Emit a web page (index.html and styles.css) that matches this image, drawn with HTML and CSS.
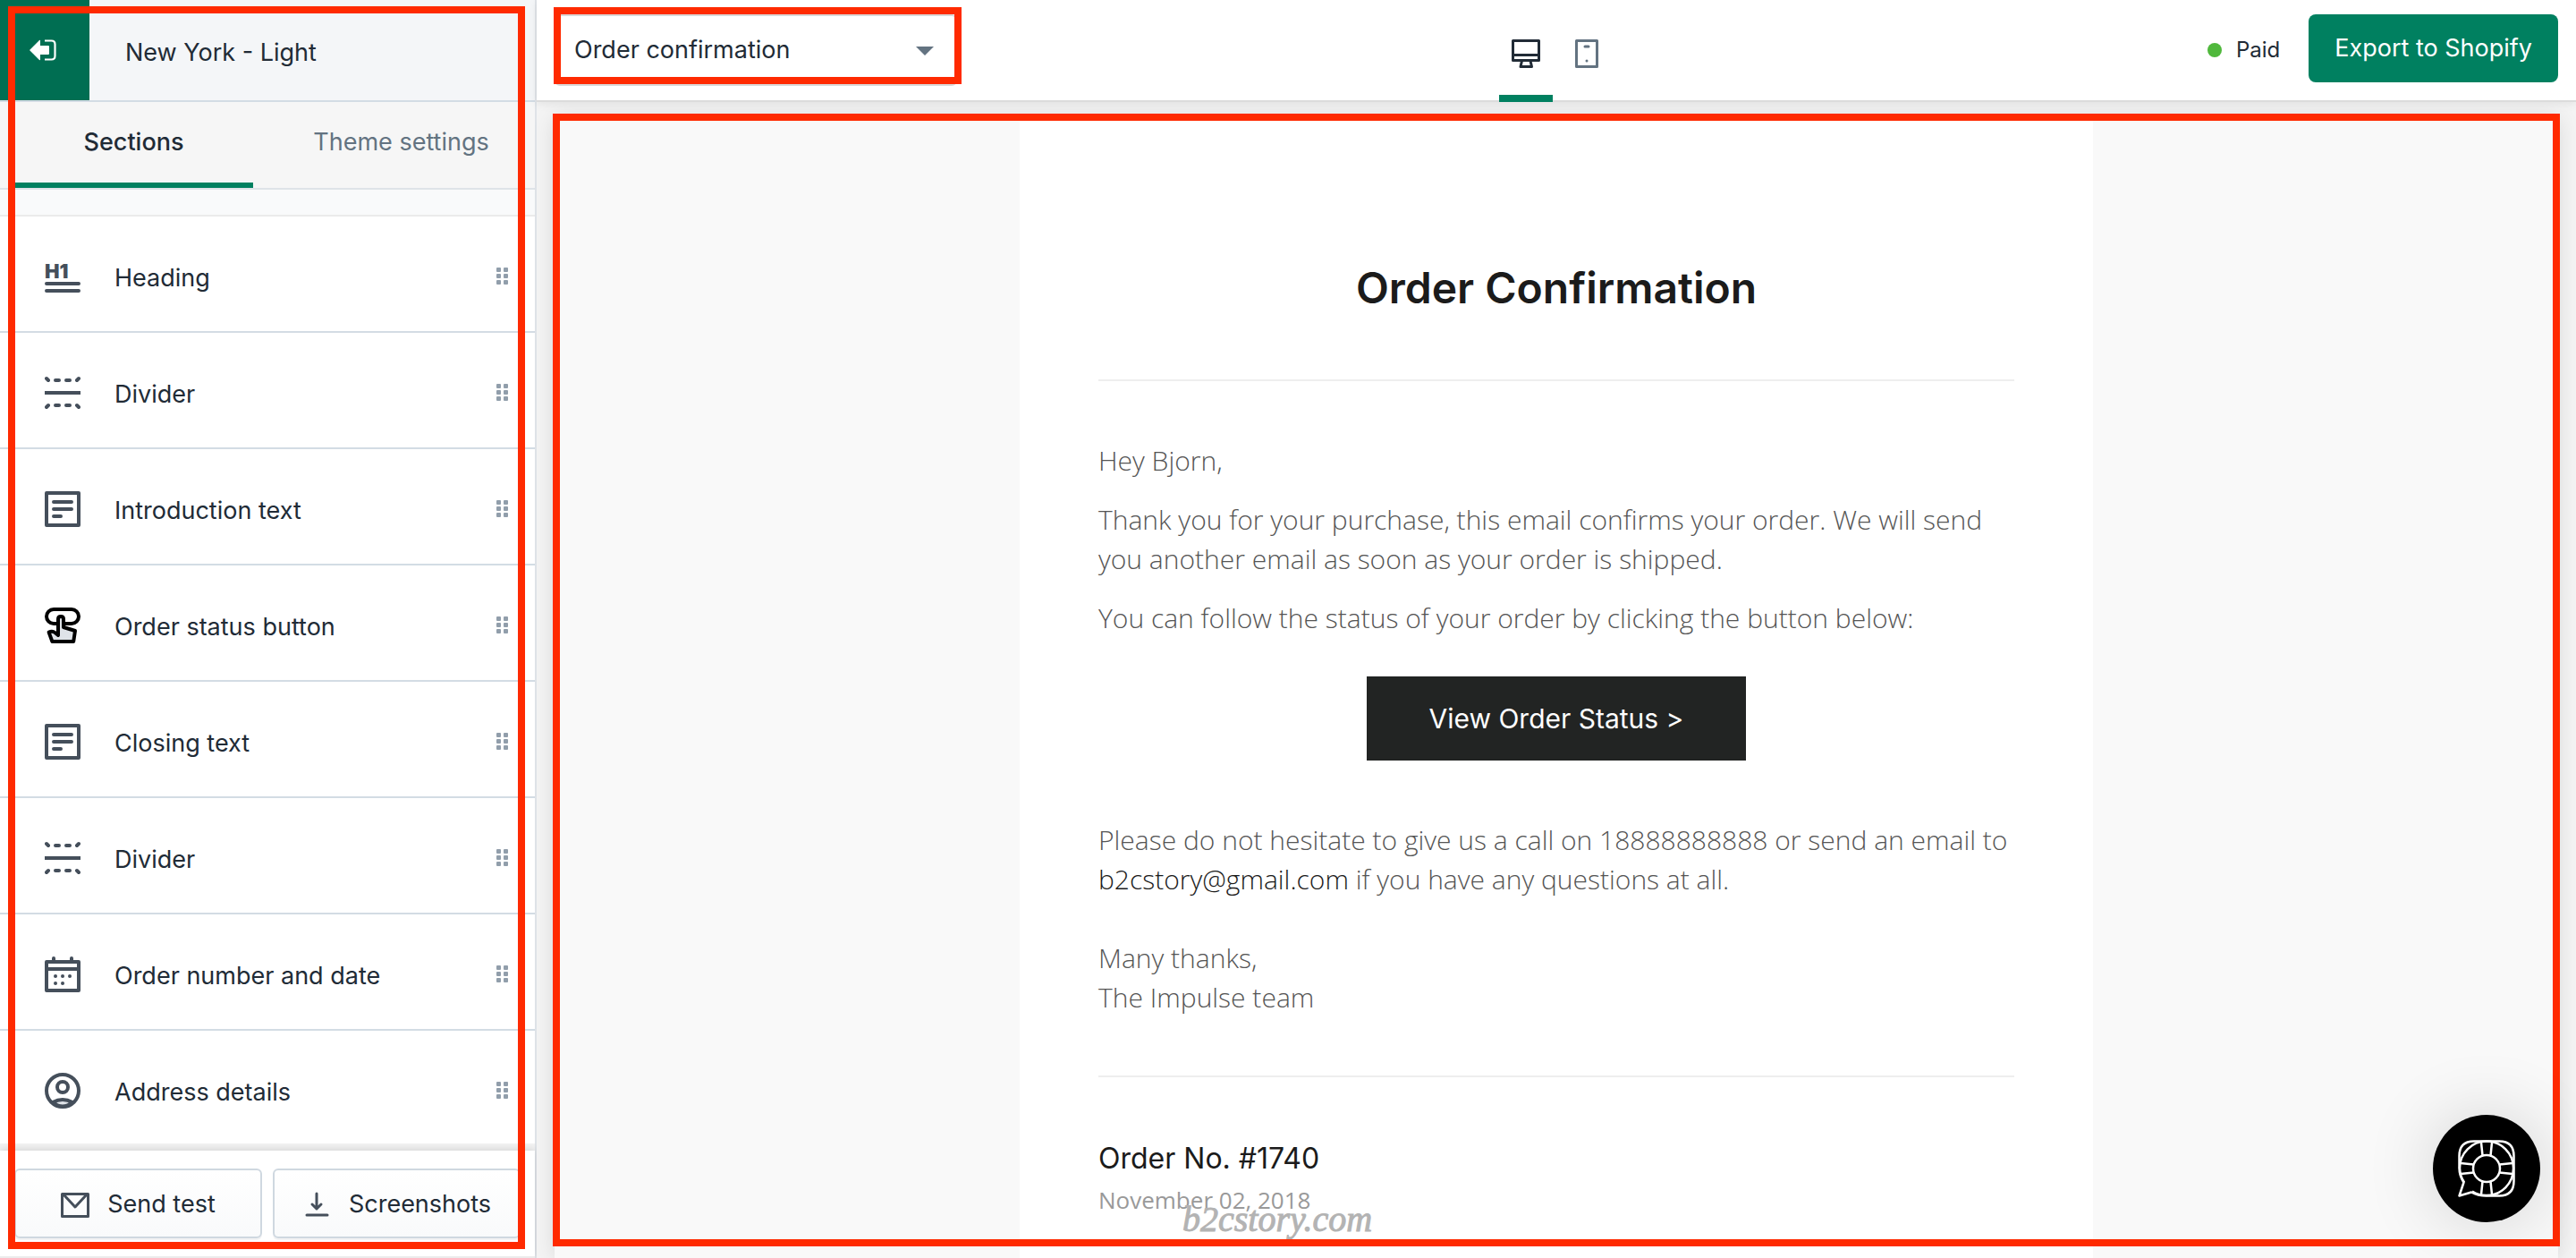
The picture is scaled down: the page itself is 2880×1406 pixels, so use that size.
FILE: index.html
```html
<!DOCTYPE html>
<html lang="en">
<head>
<meta charset="utf-8">
<title>New York - Light</title>
<link rel="stylesheet" href="styles.css">
</head>
<body>
<svg class="sprite" aria-hidden="true">
  <symbol id="i-divider" viewBox="0 0 20 20">
    <path d="M0 10h20" stroke-width="2"/>
    <path d="M1 2l1 1M19 2l-1 1M1 18l1-1M19 18l-1-1M6 3h2M12 3h2M6 17h2M12 17h2" stroke-width="2" stroke-linecap="round"/>
  </symbol>
  <symbol id="i-text" viewBox="0 0 20 20">
    <rect x="1" y="1" width="18" height="18" stroke-width="2" stroke-linejoin="round"/>
    <path d="M5 6h10M5 10h10M5 14h4" stroke-width="2" stroke-linecap="round"/>
  </symbol>
  <symbol id="i-grip" viewBox="0 0 14 20">
    <g fill="#919eab" stroke="none"><rect width="5" height="5" rx="1"/><rect x="8" width="5" height="5" rx="1"/><rect y="7" width="5" height="5" rx="1"/><rect x="8" y="7" width="5" height="5" rx="1"/><rect y="14" width="5" height="5" rx="1"/><rect x="8" y="14" width="5" height="5" rx="1"/></g>
  </symbol>
</svg>
<div class="app">
  <aside class="sidebar">
    <header class="theme-bar">
      <button class="exit" aria-label="Exit">
        <svg viewBox="0 0 30 24"><path d="M0 12L11 1q1-.6 1 .6V7h9q1 0 1 1v8q0 1-1 1h-9v5.400q0 1.200-1 .6z" fill="#fff"/><path d="M17 1.500h7.500q4 0 4 4v13q0 4-4 4H17" fill="none" stroke="#fff" stroke-width="2.200"/></svg>
      </button>
      <h1 class="theme-name">New York - Light</h1>
    </header>
    <nav class="tabs">
      <button class="tab tab-active">Sections</button>
      <button class="tab">Theme settings</button>
    </nav>
    <ul class="sections">
      <li class="row"><svg class="icon" viewBox="0 0 20 20"><text x="0" y="11" class="icon-text">H1</text><path d="M1 14h18M1 18h18" stroke-width="2" stroke-linecap="round"/></svg><span>Heading</span><svg class="grip"><use href="#i-grip"/></svg></li>
      <li class="row"><svg class="icon"><use href="#i-divider"/></svg><span>Divider</span><svg class="grip"><use href="#i-grip"/></svg></li>
      <li class="row"><svg class="icon"><use href="#i-text"/></svg><span>Introduction text</span><svg class="grip"><use href="#i-grip"/></svg></li>
      <li class="row"><svg class="icon icon-black" viewBox="0 0 20 20"><path d="M7 9H5a4 4 0 0 1 0-8h10a4 4 0 0 1 0 8h-4" stroke-width="2"/><path d="M7.500 15.500V6.500q0-1.500 1.500-1.500t1.500 1.500V11l6.500 2-.9 6H4.200L2.300 13.800q2-.9 3.400.2z" fill="#dfe3e8" stroke-width="2" stroke-linejoin="round"/></svg><span>Order status button</span><svg class="grip"><use href="#i-grip"/></svg></li>
      <li class="row"><svg class="icon"><use href="#i-text"/></svg><span>Closing text</span><svg class="grip"><use href="#i-grip"/></svg></li>
      <li class="row"><svg class="icon"><use href="#i-divider"/></svg><span>Divider</span><svg class="grip"><use href="#i-grip"/></svg></li>
      <li class="row"><svg class="icon" viewBox="0 0 20 20"><path d="M1 3h18v16H1zM1 7h18" stroke-width="2" stroke-linejoin="round"/><path d="M5 1v2M15 1v2" stroke-width="2" stroke-linecap="round"/><path d="M6 11h.01M10 11h.01M14 11h.01M6 15h.01M10 15h.01" stroke-width="2" stroke-linecap="round"/></svg><span>Order number and date</span><svg class="grip"><use href="#i-grip"/></svg></li>
      <li class="row"><svg class="icon" viewBox="0 0 20 20"><path d="M4.500 16.500q5.500-3 11 0Q10 21 4.500 16.500z" fill="#dfe3e8" stroke-width="2"/><circle cx="10" cy="10" r="9" stroke-width="2"/><circle cx="10" cy="8" r="3" stroke-width="2"/></svg><span>Address details</span><svg class="grip"><use href="#i-grip"/></svg></li>
    </ul>
    <footer class="actions">
      <button class="action"><svg class="action-icon" viewBox="0 0 32 32"><path d="M1.500 4.500h29v25h-29zM3 5l13 14L29 5" stroke-width="3" stroke-linejoin="round"/></svg>Send test</button>
      <button class="action"><svg class="action-icon" viewBox="0 0 32 32"><path d="M16 4v17M11 16l5 5 5-5M5 28h23" stroke-width="3" stroke-linecap="round" stroke-linejoin="round"/></svg>Screenshots</button>
    </footer>
    <div class="mark mark-sidebar"></div>
  </aside>
  <div class="editor">
    <header class="toolbar">
      <div class="picker">
        <select class="picker-select" aria-label="Email template"><option>Order confirmation</option></select>
        <svg class="caret" viewBox="0 0 20 10"><path d="M0 0h20L10 10z" fill="#637381"/></svg>
        <div class="mark mark-picker"></div>
      </div>
      <div class="devices">
        <button class="device device-active" aria-label="Desktop"><svg viewBox="0 0 32 32"><path d="M1.500 1.500h29v22h-29zM1.500 17.500h29M11.500 24l-1.500 6.500h12.500L21 24" stroke="#212b36" stroke-width="3" stroke-linejoin="round"/></svg></button>
        <button class="device" aria-label="Mobile"><svg viewBox="0 0 32 32"><path d="M4.500 1.500h23v29h-23z" stroke="#637381" stroke-width="3" stroke-linejoin="round"/><path d="M14 8h4M16 24h.01" stroke="#637381" stroke-width="3" stroke-linecap="round"/></svg></button>
      </div>
      <div class="export">
        <span class="status">Paid</span>
        <button class="primary">Export to Shopify</button>
      </div>
    </header>
    <main class="stage">
      <div class="preview">
        <article class="email">
          <h2 class="email-title">Order Confirmation</h2>
          <div class="email-body">
            <p>Hey Bjorn,</p>
            <p>Thank you for your purchase, this email confirms your order. We will send you another email as soon as your order is shipped.</p>
            <p>You can follow the status of your order by clicking the button below:</p>
            <a class="cta" href="#">View Order Status &gt;</a>
            <p>Please do not hesitate to give us a call on 18888888888 or send an email to <a class="mail" href="mailto:b2cstory@gmail.com">b2cstory@gmail.com</a> if you have any questions at all.</p>
            <p class="signoff">Many thanks,<br>The Impulse team</p>
          </div>
          <div class="order">
            <h3 class="order-no">Order No. #1740</h3>
            <p class="order-date">November 02, 2018</p>
            <span class="watermark">b2cstory.com</span>
          </div>
        </article>
      </div>
      <div class="mark mark-preview"></div>
      <button class="help" aria-label="Help">
        <svg viewBox="0 0 64 64" fill="none" stroke="#fff" stroke-width="2.500"><path d="M1.500 62.500l5-15Q1.500 40 1.500 31V18Q1.500 1.500 18 1.500h28q16.500 0 16.500 16.500v28q0 16.500-16.500 16.500H32q-10 0-17-4z" stroke-linejoin="round"/><path d="M7 47.500A30 30 0 0 1 2 31.500a30 30 0 0 1 60 0 30 30 0 0 1-30 30.500 29 29 0 0 1-16-4.500"/><circle cx="32" cy="32" r="15"/><path d="M27.500 17.500L26 3M36.500 17.500L38 3M27.500 46.500L26 61M36.500 46.500L38 61M17.500 27.500L3 26M17.500 36.500L3 38M46.500 27.500L61 26M46.500 36.500L61 38"/></svg>
      </button>
    </main>
  </div>
</div>
</body>
</html>
```
FILE: styles.css
```css
* { box-sizing: border-box; }
body { margin: 0; font-family: Inter, "Noto Sans", sans-serif; font-size: 27px; line-height: 40px; color: #212b36; background: #f4f6f8; }
h1, h2, h3, p, ul { margin: 0; padding: 0; }
button { font: inherit; color: inherit; border: 0; padding: 0; background: none; }
svg { display: block; fill: none; }
.sprite { display: none; }
.app { display: flex; height: 100vh; overflow: hidden; }

/* Sidebar */
.sidebar { position: relative; flex: none; width: 600px; display: flex; flex-direction: column; background: #fff; border-right: 2px solid #dfe3e8; }
.theme-bar { display: flex; align-items: center; height: 114px; background: #f4f6f8; border-bottom: 2px solid #d3dce4; }
.exit { display: flex; align-items: center; align-self: stretch; width: 100px; padding-left: 33px; background: #006e52; }
.exit svg { width: 30px; height: 24px; }
.theme-name { font-size: 27px; font-weight: 400; margin-left: 40px; padding-top: 5px; }
.tabs { display: grid; grid-template-columns: 1fr 1fr; height: 98px; background: #f6f6f6; border-bottom: 2px solid #dfe3e8; }
.tab { display: flex; flex-direction: column; align-items: center; color: #637381; padding-top: 25px; }
.tab-active { margin: 0 16px; color: #212b36; font-weight: 500; border-bottom: 6px solid #008060; }
.sections { flex: 1; list-style: none; padding-top: 28px; background: linear-gradient(#f9fafb 0 28px, #f3f3f3 28px); }
.row { display: flex; align-items: center; height: 130px; padding: 5px 29px 0 50px; background: #fff; border-bottom: 2px solid #d3dce4; }
.row:first-child { height: 132px; border-top: 2px solid #ebebeb; }
.row:last-child { height: 126px; padding-top: 7px; border-bottom: 0; }
.row span { flex: 1; margin-left: 38px; padding-top: 4px; }
.icon { width: 40px; height: 40px; stroke: #454f5b; }
.icon-black { stroke: #000; }
.icon-text { font: 900 11px Inter, sans-serif; fill: #454f5b; stroke: none; }
.grip { width: 14px; height: 20px; }
.actions { display: flex; gap: 12px; padding: 20px 16px; background: #fff; border-bottom: 2px solid #ebebeb; box-shadow: 0 -2px 8px rgba(0, 0, 0, .12); }
.action { flex: 1; display: flex; align-items: center; justify-content: center; gap: 20px; height: 78px; padding-top: 2px; border: 2px solid #cfd8e0; border-radius: 6px; background: linear-gradient(#fff, #f9fafb); box-shadow: 0 2px 0 rgba(22, 29, 37, .05); }
.action-icon { width: 32px; height: 32px; stroke: #454f5b; }

/* Toolbar */
.editor { flex: 1; min-width: 0; display: flex; flex-direction: column; }
.toolbar { position: relative; z-index: 1; display: grid; grid-template-columns: 1fr auto 1fr; height: 114px; padding: 0 20px; background: #fff; border-bottom: 2px solid #dcdcdc; box-shadow: 0 2px 10px rgba(0, 0, 0, .08); }
.picker { position: relative; align-self: start; width: 450px; margin-top: 16px; }
.picker-select { appearance: none; width: 100%; height: 80px; padding: 0 20px; font: inherit; color: inherit; background: #fff; border: 2px solid #d8d8d8; border-radius: 6px; }
.caret { position: absolute; right: 26px; top: 36px; width: 20px; height: 10px; }
.devices { display: flex; gap: 8px; }
.device { display: flex; align-items: center; justify-content: center; width: 60px; height: 114px; padding-top: 6px; }
.device svg { width: 32px; height: 32px; }
.device-active { padding-top: 14px; border-bottom: 8px solid #008060; }
.export { display: flex; align-items: flex-start; justify-content: flex-end; gap: 32px; padding-top: 16px; }
.status { display: flex; align-items: center; gap: 16px; height: 80px; font-size: 24px; }
.status::before { content: ""; width: 16px; height: 16px; border-radius: 50%; background: #50b83c; }
.primary { height: 76px; padding: 0 29px; color: #fff; background: #008060; border-radius: 8px; }

/* Email preview */
.stage { position: relative; flex: 1; min-height: 0; padding: 18px 20px 0; background: #f4f4f4; }
.preview { height: 100%; overflow: hidden; background: #f9f9f9; box-shadow: 0 0 24px rgba(0, 0, 0, .12); }
.email { width: 1200px; margin: 0 auto; padding: 160px 88px 80px; background: #fff; font-family: "Open Sans", sans-serif; font-weight: 300; color: #555; }
.email-title { padding-bottom: 72px; font: 600 48px/60px Inter, sans-serif; color: #1b1b1b; text-align: center; border-bottom: 2px solid #eee; }
.email-body { display: flex; flex-direction: column; gap: 22px; padding: 67px 0 65px; font-size: 30px; line-height: 44px; border-bottom: 2px solid #eee; }
.cta { align-self: center; margin: 21px 0 45px; padding: 25px 70px; font: 400 30px/44px Inter, sans-serif; color: #fff; background: #222423; text-decoration: none; }
.mail { color: #1b1b1b; text-decoration: none; }
.signoff { margin-top: 22px; }
.order { position: relative; padding-top: 69px; }
.order-no { font: 400 32px/44px Inter, sans-serif; color: #1b1b1b; }
.order-date { margin-top: 4px; font-size: 26px; line-height: 40px; font-weight: 400; color: #999; }
.watermark { position: absolute; left: 94px; top: 137px; font: italic 400 40px/44px "Liberation Serif", serif; color: #b3b3b3; -webkit-text-stroke: 1px #b3b3b3; }

/* Highlight frames */
.mark { position: absolute; border: 8px solid #ff2a00; pointer-events: none; }
.mark-sidebar { inset: 7px 11px 10px 9px; }
.mark-picker { inset: -8px -5px 2px -1px; }
.mark-preview { inset: 13px 18px 13px 18px; }
.help { position: absolute; right: 40px; bottom: 40px; width: 120px; height: 120px; padding: 28px; border-radius: 50%; background: #000; box-shadow: 0 0 80px rgba(0, 0, 0, .16); }
```
